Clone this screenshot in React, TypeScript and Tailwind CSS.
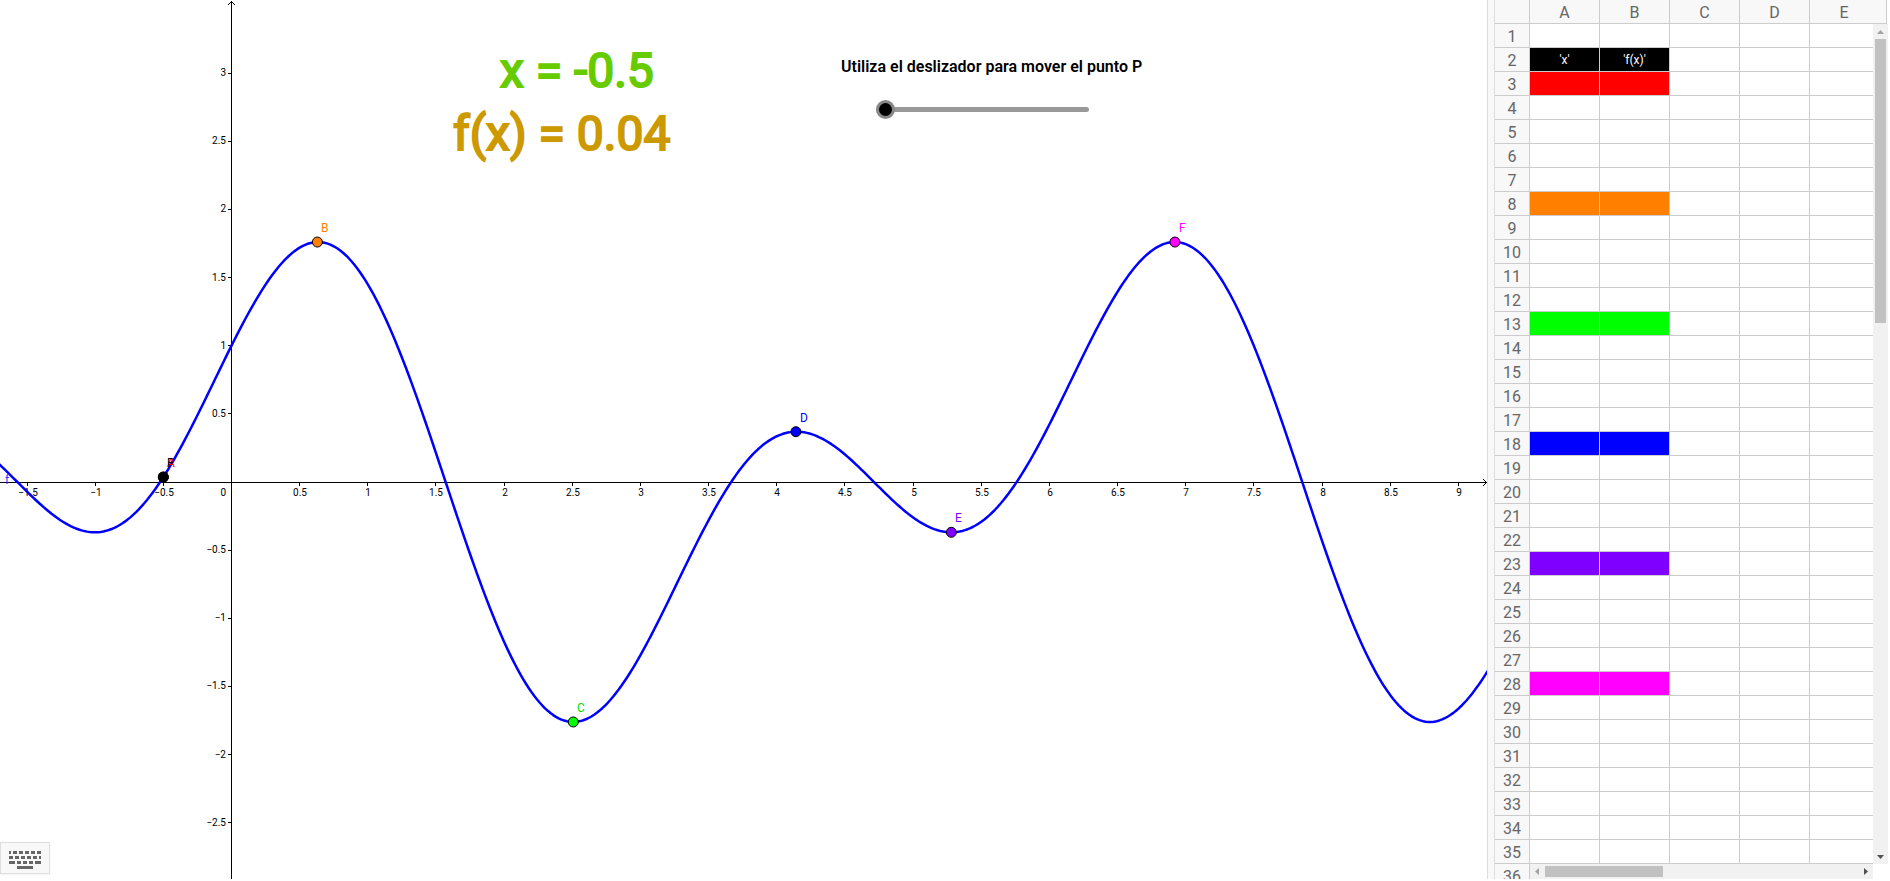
import { useState } from 'react'

// ── Function and view ─────────────────────────────────────────────────────────

const UNIT = 136.33
const ORIGIN_X = 231.5
const ORIGIN_Y = 482

const f = (x: number) => Math.cos(x) + Math.sin(2 * x)
const toX = (x: number) => ORIGIN_X + x * UNIT
const toY = (y: number) => ORIGIN_Y - y * UNIT

// one pixel lines sit on pixel centres
const snap = (n: number) => Math.floor(n) + 0.5

function range(from: number, to: number, step: number) {
  const out: number[] = []
  for (let v = from; v <= to; v += step) out.push(v)
  return out
}

const formatTick = (n: number) => String(n).replace('-', '−')

const CURVE = range(-2, 20, 0.02)
  .map((x, i) => `${i === 0 ? 'M' : 'L'}${toX(x).toFixed(2)} ${toY(f(x)).toFixed(2)}`)
  .join('')

const X_TICKS = range(-1.5, 9, 0.5).filter(v => v !== 0)
const Y_TICKS = range(-2.5, 3, 0.5).filter(v => v !== 0)

const POINTS = [
  { name: 'A', x: -0.5, color: '#ff0000' },
  { name: 'B', x: 0.63, color: '#ff7f00' },
  { name: 'C', x: 2.507, color: '#00ff00', text: '#00e000' },
  { name: 'D', x: 4.14, color: '#0000ff' },
  { name: 'E', x: 5.28, color: '#7f00ff' },
  { name: 'F', x: 6.92, color: '#ff00ff' },
]

// ── Spreadsheet data ──────────────────────────────────────────────────────────

const COLUMNS = ['A', 'B', 'C', 'D', 'E']
const ROWS = range(1, 36, 1)

const ROW_FILL: Record<number, string> = {
  2: 'bg-black',
  3: 'bg-[#ff0000]',
  8: 'bg-[#ff7f00]',
  13: 'bg-[#00ff00]',
  18: 'bg-[#0000ff]',
  23: 'bg-[#7f00ff]',
  28: 'bg-[#ff00ff]',
}

const CELLS: Record<string, string> = { A2: "'x'", B2: "'f(x)'" }

// ── Graph ─────────────────────────────────────────────────────────────────────

function Graph({ px }: { px: number }) {
  return (
    <svg className="block w-full h-full" role="img" aria-label="f(x)">
      {/* Axes */}
      <g stroke="#000" strokeWidth="1" fill="none">
        <line x1="0" y1={snap(ORIGIN_Y)} x2="100%" y2={snap(ORIGIN_Y)} />
        <line x1={snap(ORIGIN_X)} y1="1" x2={snap(ORIGIN_X)} y2="100%" />
        <path d="M228 5 L231.5 1.5 L235 5" />
        <svg x="100%" y={snap(ORIGIN_Y)} overflow="visible">
          <path d="M-4 -3.5 L-0.5 0 L-4 3.5" />
        </svg>
        {X_TICKS.map(v => (
          <line key={v} x1={snap(toX(v))} x2={snap(toX(v))} y1="483" y2="486" />
        ))}
        {Y_TICKS.map(v => (
          <line key={v} x1="228" x2="231" y1={snap(toY(v))} y2={snap(toY(v))} />
        ))}
      </g>

      {/* Tick labels */}
      <g fontSize="10" fill="#000">
        {X_TICKS.map(v => (
          <text key={v} x={Math.ceil(toX(v))} y="496" textAnchor="middle">{formatTick(v)}</text>
        ))}
        {Y_TICKS.map(v => (
          <text key={v} x="226" y={Math.round(toY(v)) + 3} textAnchor="end">{formatTick(v)}</text>
        ))}
        <text x="226" y="496" textAnchor="end">0</text>
      </g>

      <path d={CURVE} fill="none" stroke="#0000ff" strokeWidth="2.5" strokeLinejoin="round" />
      <text x="5" y="484" fontSize="12" fill="#3333ff">f</text>

      {/* Points */}
      {POINTS.map(p => (
        <g key={p.name}>
          <circle cx={toX(p.x)} cy={toY(f(p.x))} r="5" fill={p.color} stroke="#000" />
          <text x={Math.round(toX(p.x)) + 4} y={Math.round(toY(f(p.x))) - 10} fontSize="12" fill={p.text ?? p.color}>
            {p.name}
          </text>
        </g>
      ))}
      <circle cx={toX(px)} cy={toY(f(px))} r="5.5" fill="#000" />
      <text x={Math.round(toX(px)) + 4} y={Math.round(toY(f(px))) - 10} fontSize="12" fill="#000">P</text>
    </svg>
  )
}

function KeyboardIcon() {
  return (
    <svg width="32" height="18" viewBox="0 0 32 18" fill="#666" shapeRendering="crispEdges">
      <path d="M0 0h2v3H0zM4 0h4v3H4zM10 0h4v3h-4zM16 0h4v3h-4zM22 0h4v3h-4zM28 0h4v3h-4z" />
      <path d="M0 5h4v3H0zM6 5h4v3H6zM12 5h4v3h-4zM18 5h4v3h-4zM24 5h4v3h-4zM30 5h2v3h-2z" />
      <path d="M0 10h6v3H0zM8 10h4v3H8zM14 10h4v3h-4zM20 10h4v3h-4zM26 10h6v3h-6z" />
      <path d="M8 15h16v3H8z" />
    </svg>
  )
}

// ── Spreadsheet ───────────────────────────────────────────────────────────────

function Spreadsheet() {
  return (
    <section className="relative w-[395px] h-full shrink-0 overflow-hidden bg-white">
      <table className="w-[392px] table-fixed border-separate border-spacing-0 text-base leading-[21px] text-[#666]">
        <colgroup>
          <col className="w-[35px]" />
          <col className="w-[70px]" />
          <col className="w-[70px]" />
          <col className="w-[70px]" />
          <col className="w-[70px]" />
          <col />
        </colgroup>
        <thead>
          <tr className="h-6 bg-[#f8f8f8]">
            <td className="p-0 border-r border-b border-[#ccc]" />
            {COLUMNS.map(c => (
              <th key={c} scope="col" className="p-0 border-r border-b border-[#ccc] align-bottom font-normal last:pr-2">{c}</th>
            ))}
          </tr>
        </thead>
        <tbody>
          {ROWS.map(r => (
            <tr key={r} className="h-6">
              <th scope="row" className="p-0 border-r border-b border-[#ccc] bg-[#f8f8f8] align-bottom font-normal">{r}</th>
              {COLUMNS.map((c, i) => (
                <td
                  key={c}
                  className={`p-0 border-r border-b border-[#ccc] text-center text-xs leading-5 text-white ${
                    i < 2 && ROW_FILL[r] ? ROW_FILL[r] : ''
                  }`}
                >
                  {CELLS[c + r]}
                </td>
              ))}
            </tr>
          ))}
        </tbody>
      </table>

      {/* Scrollbars */}
      <div className="absolute right-0 top-6 bottom-0 w-[17px] pb-[15px] bg-white flex flex-col">
        <div className="flex flex-col items-center w-[15px] flex-1 bg-[#f1f1f1]">
          <svg width="15" height="15" className="shrink-0"><path d="M4 10h7L7.5 6z" fill="#a3a3a3" /></svg>
          <div className="w-[11px] h-[284px] bg-[#c1c1c1]" />
          <div className="flex-1" />
          <svg width="15" height="15" className="shrink-0"><path d="M4 6h7L7.5 10z" fill="#505050" /></svg>
        </div>
      </div>
      <div className="absolute left-[35px] right-[17px] bottom-0 flex items-center h-[15px] bg-[#f1f1f1]">
        <svg width="15" height="15" className="shrink-0"><path d="M9 4v7L5 7.5z" fill="#a3a3a3" /></svg>
        <div className="w-[118px] h-[11px] bg-[#c1c1c1]" />
        <div className="flex-1" />
        <svg width="15" height="15" className="shrink-0"><path d="M6 4v7L10 7.5z" fill="#505050" /></svg>
      </div>
    </section>
  )
}

// ── App ───────────────────────────────────────────────────────────────────────

export default function App() {
  const [px, setPx] = useState(-0.5)

  return (
    <div className="flex h-screen overflow-hidden pb-0.5 bg-white font-[Roboto,sans-serif]">
      <main className="relative flex-1 min-w-0 overflow-hidden">
        <Graph px={px} />

        <p className="absolute left-[500px] top-[41px] text-5xl leading-[60px] [-webkit-text-stroke:2px] text-[#66cc00] whitespace-nowrap">
          x = {Number(px.toFixed(2))}
        </p>
        <p className="absolute left-[453px] top-[104px] text-5xl leading-[60px] [-webkit-text-stroke:2px] text-[#cc9900] whitespace-nowrap">
          f(x) = {f(px).toFixed(2)}
        </p>

        <label htmlFor="point" className="absolute left-[841px] top-[55px] text-base leading-6 font-semibold whitespace-nowrap">
          Utiliza el deslizador para mover el punto P
        </label>
        <input
          id="point"
          type="range"
          min={-0.5}
          max={8}
          step={0.01}
          value={px}
          onChange={e => setPx(Number(e.target.value))}
          className="absolute left-[876px] top-[100px] w-[213px] h-[18px] appearance-none bg-transparent [&::-webkit-slider-runnable-track]:h-[5px] [&::-webkit-slider-runnable-track]:rounded-full [&::-webkit-slider-runnable-track]:bg-[#999] [&::-webkit-slider-thumb]:appearance-none [&::-webkit-slider-thumb]:-mt-[7px] [&::-webkit-slider-thumb]:size-[19px] [&::-webkit-slider-thumb]:rounded-full [&::-webkit-slider-thumb]:border-3 [&::-webkit-slider-thumb]:border-[#888] [&::-webkit-slider-thumb]:bg-black"
        />

        <button
          aria-label="Teclado"
          className="absolute left-0 bottom-[5px] flex items-center justify-center w-[50px] h-8 pt-1 border border-[#ddd] bg-[#f8f8f8] shadow-xs"
        >
          <KeyboardIcon />
        </button>
      </main>

      <div className="w-2 shrink-0 border-x border-[#ddd] bg-[#f8f8f8]" />
      <Spreadsheet />
    </div>
  )
}
